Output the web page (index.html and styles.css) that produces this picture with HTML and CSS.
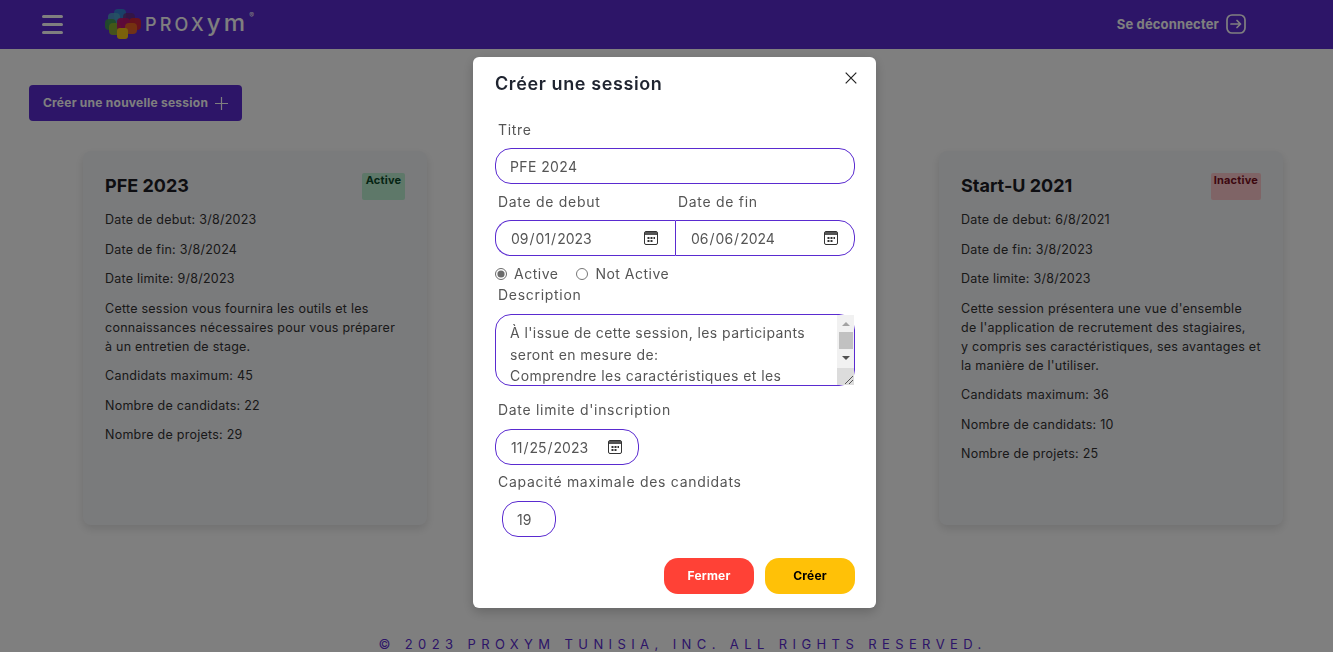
FILE: index.html
```html
<!DOCTYPE html>
<html lang="fr">
<head>
    <meta charset="UTF-8">
    <title>Sessions</title>
    <link rel="stylesheet" href="styles.css">
</head>
<body>
    <header class="topbar">
        <div class="topbar-left">
            <button class="menu-btn" type="button" aria-label="Menu">
                <span></span><span></span><span></span>
            </button>
            <a class="logo" href="#">
                <svg class="logo-mark" width="36" height="30" viewBox="0 0 36 30">
                    <rect x="9" y="0" width="12" height="11" rx="4" fill="#2f8fd0" opacity=".85"/>
                    <rect x="3" y="4" width="12" height="12" rx="4" fill="#4ea6c8" opacity=".85"/>
                    <rect x="18" y="4" width="12" height="12" rx="4" fill="#6a2a7a" opacity=".8"/>
                    <rect x="0" y="10" width="11" height="11" rx="4" fill="#3f9a4a" opacity=".9"/>
                    <rect x="24" y="9" width="12" height="12" rx="4" fill="#d8232a" opacity=".9"/>
                    <rect x="4" y="14" width="12" height="12" rx="4" fill="#8fb52a" opacity=".9"/>
                    <rect x="12" y="9" width="13" height="13" rx="4" fill="#c4126a" opacity=".9"/>
                    <rect x="20" y="14" width="12" height="11" rx="4" fill="#ee6a1f" opacity=".9"/>
                    <rect x="12" y="19" width="11" height="11" rx="3" fill="#f6c514"/>
                </svg>
                <span class="logo-text">PROX<span class="logo-low">ym</span></span>
                <span class="logo-reg">®</span>
            </a>
        </div>
        <a class="logout" href="#">
            Se déconnecter
            <svg width="20" height="20" viewBox="0 0 20 20" fill="none" stroke="currentColor" stroke-width="1.7" stroke-linecap="round" stroke-linejoin="round">
                <rect x="1" y="1" width="18" height="18" rx="5"/>
                <path d="M5 10h9.5M11 6.5l3.5 3.5-3.5 3.5"/>
            </svg>
        </a>
    </header>

    <main class="content">
        <button class="new-session" type="button">
            <span>Créer une nouvelle session</span>
            <svg width="13" height="13" viewBox="0 0 13 13" stroke="currentColor" stroke-width="1.2"><path d="M6.5 0v13M0 6.5h13"/></svg>
        </button>

        <section class="cards">
            <article class="card">
                <div class="card-head">
                    <h3>PFE 2023</h3>
                    <span class="badge badge-active">Active</span>
                </div>
                <p>Date de debut: 3/8/2023</p>
                <p>Date de fin: 3/8/2024</p>
                <p>Date limite: 9/8/2023</p>
                <p>Cette session vous fournira les outils et les<br>connaissances nécessaires pour vous préparer<br>à un entretien de stage.</p>
                <p>Candidats maximum: 45</p>
                <p>Nombre de candidats: 22</p>
                <p>Nombre de projets: 29</p>
            </article>
            <article class="card"></article>
            <article class="card">
                <div class="card-head">
                    <h3>Start-U 2021</h3>
                    <span class="badge badge-inactive">Inactive</span>
                </div>
                <p>Date de debut: 6/8/2021</p>
                <p>Date de fin: 3/8/2023</p>
                <p>Date limite: 3/8/2023</p>
                <p>Cette session présentera une vue d'ensemble<br>de l'application de recrutement des stagiaires,<br>y compris ses caractéristiques, ses avantages et<br>la manière de l'utiliser.</p>
                <p>Candidats maximum: 36</p>
                <p>Nombre de candidats: 10</p>
                <p>Nombre de projets: 25</p>
            </article>
        </section>
    </main>

    <footer class="footer">© 2023 PROXYM TUNISIA, INC. ALL RIGHTS RESERVED.</footer>

    <div class="overlay">
        <form class="modal">
            <div class="modal-head">
                <h2>Créer une session</h2>
                <button class="close" type="button" aria-label="Fermer">
                    <svg width="12" height="12" viewBox="0 0 12 12" stroke="#222" stroke-width="1.2"><path d="M.7.7l10.6 10.6M11.3.7L.7 11.3"/></svg>
                </button>
            </div>

            <label class="field-label title-label" for="titre">Titre</label>
            <input class="field text-field" id="titre" type="text" value="PFE 2024">

            <div class="date-row">
                <div class="date-col">
                    <label class="field-label" for="debut">Date de debut</label>
                    <input class="field date-left" id="debut" type="date" value="2023-09-01">
                </div>
                <div class="date-col">
                    <label class="field-label" for="fin">Date de fin</label>
                    <input class="field date-right" id="fin" type="date" value="2024-06-06">
                </div>
            </div>

            <div class="radios">
                <label><input type="radio" name="status" checked> Active</label>
                <label><input type="radio" name="status"> Not Active</label>
            </div>

            <label class="field-label desc-label" for="description">Description</label>
            <div class="area-wrap">
                <textarea class="field area" id="description">À l'issue de cette session, les participants seront en mesure de:
Comprendre les caractéristiques et les avantages de l'application de recrutement.
Utiliser les principales fonctions de l'application.
Préparer un entretien de stage.</textarea>
                <!-- scrollbar of the textarea, headless browser hides the real one -->
                <div class="scrollbar" aria-hidden="true">
                    <span class="arrow-up"></span>
                    <span class="thumb"></span>
                    <span class="arrow-down"></span>
                    <span class="grip">
                        <svg width="17" height="17" viewBox="0 0 17 17" stroke="#555" stroke-width="1"><path d="M8 16l8-8M12 16l4-4"/></svg>
                    </span>
                </div>
            </div>

            <label class="field-label limit-label" for="limite">Date limite d'inscription</label>
            <input class="field limit-date" id="limite" type="date" value="2023-11-25">

            <label class="field-label cap-label" for="capacite">Capacité maximale des candidats</label>
            <input class="field cap-input" id="capacite" type="number" value="19">

            <div class="modal-actions">
                <button class="btn btn-close" type="button">Fermer</button>
                <button class="btn btn-create" type="submit">Créer</button>
            </div>
        </form>
    </div>
</body>
</html>
```

FILE: styles.css
```css
* {
    box-sizing: border-box;
}
html, body {
    height: 100%;
}
body {
    margin: 0;
    overflow: hidden;
    background: #fff;
    color: #333;
    font-family: Inter, "Noto Sans", sans-serif;
    font-size: 13px;
}
.topbar {
    height: 49px;
    background: #5a2bd0;
    color: #fff;
    display: flex;
    align-items: center;
    justify-content: space-between;
    padding: 0 87px 1px 42px;
}
.topbar-left {
    display: flex;
    align-items: center;
    gap: 42px;
}
.menu-btn {
    width: 21px;
    padding: 0;
    border: 0;
    background: none;
    display: flex;
    flex-direction: column;
    gap: 5px;
}
.menu-btn span {
    height: 3px;
    background: #fff;
    border-radius: 2px;
}
.logo {
    display: flex;
    align-items: center;
    gap: 4px;
    color: #fff;
    text-decoration: none;
}
.logo-text {
    font-size: 18px;
    font-weight: 500;
    letter-spacing: 3.2px;
}
.logo-low {
    font-size: 24px;
    font-weight: 500;
    line-height: 18px;
}
.logo-reg {
    align-self: flex-start;
    margin: 3px 0 0 -3px;
    font-size: 7px;
    line-height: 8px;
}
.logout {
    display: flex;
    align-items: center;
    gap: 7px;
    color: #fff;
    font-weight: 700;
    font-size: 13px;
    letter-spacing: .15px;
    text-decoration: none;
}
.content {
    padding: 36px 0 0 29px;
}
.new-session {
    height: 36px;
    width: 213px;
    display: flex;
    align-items: center;
    justify-content: center;
    gap: 7px;
    border: 0;
    border-radius: 4px;
    background: #5a2bd0;
    color: #fff;
    font: 700 12px Inter, sans-serif;
    letter-spacing: .25px;
}
.new-session span {
    margin-bottom: 2px;
}
.cards {
    display: grid;
    grid-template-columns: repeat(3, 344px);
    gap: 84px;
    margin: 30px 0 0 54px;
}
.card {
    height: 374px;
    padding: 22px 22px 0;
    background: #f5f6f9;
    border-radius: 8px;
    box-shadow: 0 4px 10px rgba(0, 0, 0, .12);
}
.card-head {
    display: flex;
    justify-content: space-between;
    height: 37px;
}
.card h3 {
    margin: 2px 0 0;
    font-size: 18px;
    font-weight: 700;
    color: #1c1c24;
}
.card p {
    margin: 0 0 10.5px;
    font-size: 12.5px;
    line-height: 19px;
    letter-spacing: .25px;
}
.badge {
    height: 27px;
    padding: 0 3px;
    min-width: 43px;
    text-align: center;
    font-size: 11px;
    font-weight: 700;
    letter-spacing: .2px;
    border-radius: 2px;
}
.badge-active {
    background: #bdf0d2;
    color: #0b4a2a;
}
.badge-inactive {
    background: #ffc9cc;
    color: #7a0f1e;
}
.footer {
    position: absolute;
    top: 636px;
    left: 0;
    width: 100%;
    padding-left: 32px;
    text-align: center;
    font-size: 13px;
    letter-spacing: 5.4px;
    color: #5a2bd0;
    white-space: nowrap;
}
.overlay {
    position: fixed;
    inset: 0;
    padding-left: 16px;
    background: rgba(0, 0, 0, .5);
    display: flex;
    justify-content: center;
    align-items: flex-start;
}
.modal {
    width: 403px;
    height: 551px;
    margin-top: 57px;
    padding: 0 21px 0 22px;
    background: #fff;
    border-radius: 6px;
    box-shadow: 0 4px 12px rgba(0, 0, 0, .2);
    color: #555;
}
.modal-head {
    height: 60px;
    display: flex;
    justify-content: space-between;
    align-items: flex-start;
}
.modal-head h2 {
    margin: 16px 0 0;
    font-size: 18px;
    font-weight: 600;
    letter-spacing: .6px;
    color: #1f2430;
}
.close {
    margin: 15px -2px 0 0;
    padding: 0;
    border: 0;
    background: none;
    line-height: 0;
}
.field-label {
    display: block;
    height: 20px;
    padding-left: 3px;
    font-size: 14px;
    line-height: 20px;
    letter-spacing: .7px;
    color: #555;
}
.title-label {
    margin-top: 3px;
    height: 28px;
}
.desc-label {
    height: 29px;
}
.field {
    display: block;
    width: 360px;
    height: 36px;
    padding: 0 16px 0 14px;
    border: 1px solid #5a2bd0;
    border-radius: 16px;
    background: #fff;
    color: #555;
    font: 14px Inter, sans-serif;
    outline: 0;
}
.field::-webkit-calendar-picker-indicator {
    width: 14px;
    height: 14px;
    padding: 0;
    background: url("data:image/svg+xml,%3Csvg xmlns='http://www.w3.org/2000/svg' width='14' height='14' viewBox='0 0 14 14'%3E%3Crect x='.5' y='.5' width='13' height='13' rx='1.5' fill='none' stroke='%23333'/%3E%3Cpath d='M1 1h12v3H1z' fill='%23555'/%3E%3Cpath d='M3.5 6h2v2h-2zM6.5 6h2v2h-2zM9.5 6h1.5v2H9.5zM3.5 9h2v2h-2zM6.5 9h2v2h-2z' fill='%23333'/%3E%3C/svg%3E") no-repeat center;
}
.text-field {
    letter-spacing: .4px;
}
.date-row {
    display: flex;
    margin-top: 8px;
}
.date-col .field-label {
    height: 28px;
}
.date-col .field {
    width: 180px;
}
.date-left {
    border-radius: 16px 0 0 16px;
    border-right: 0;
    padding-right: 17px;
}
.date-right {
    border-radius: 0 16px 16px 0;
}
.radios {
    display: flex;
    gap: 18px;
    height: 29px;
    padding-top: 9px;
    font-size: 14px;
    line-height: 18px;
    letter-spacing: .5px;
}
.radios label {
    display: flex;
    align-items: center;
    gap: 7px;
    height: 18px;
}
.radios input {
    width: 12px;
    height: 12px;
    margin: 0;
    accent-color: #6b6b6b;
}
.area-wrap {
    position: relative;
    width: 360px;
}
.area {
    height: 72px;
    padding: 7px 32px 0 14px;
    line-height: 21.5px;
    letter-spacing: .42px;
    resize: none;
    overflow: hidden;
}
.scrollbar {
    position: absolute;
    top: 1px;
    right: 1px;
    bottom: 1px;
    width: 17px;
    background: #f1f1f1;
    display: flex;
    flex-direction: column;
    align-items: center;
}
.arrow-up {
    margin-top: 7px;
    border: 4px solid transparent;
    border-top: 0;
    border-bottom: 4px solid #a3a3a3;
}
.thumb {
    width: 14px;
    height: 17px;
    margin-top: 6px;
    background: #c1c1c1;
}
.arrow-down {
    margin-top: 7px;
    border: 4px solid transparent;
    border-bottom: 0;
    border-top: 4px solid #505050;
}
.grip {
    position: absolute;
    left: 0;
    bottom: 0;
    width: 17px;
    height: 17px;
    background: #dcdcdc;
    line-height: 0;
}
.limit-label {
    margin-top: 14px;
    height: 29px;
}
.limit-date {
    width: 144px;
}
.cap-label {
    margin-top: 7px;
    height: 29px;
}
.cap-input {
    width: 54px;
    margin-left: 7px;
}
.cap-input::-webkit-inner-spin-button {
    display: none;
}
.modal-actions {
    display: flex;
    justify-content: flex-end;
    gap: 11px;
    margin-top: 21px;
}
.btn {
    width: 90px;
    height: 36px;
    padding: 0 0 2px;
    border: 0;
    border-radius: 14px;
    font: 700 12px Inter, sans-serif;
    letter-spacing: .2px;
}
.btn-close {
    background: #ff4136;
    color: #fff;
}
.btn-create {
    background: #ffc107;
    color: #000;
}
```
